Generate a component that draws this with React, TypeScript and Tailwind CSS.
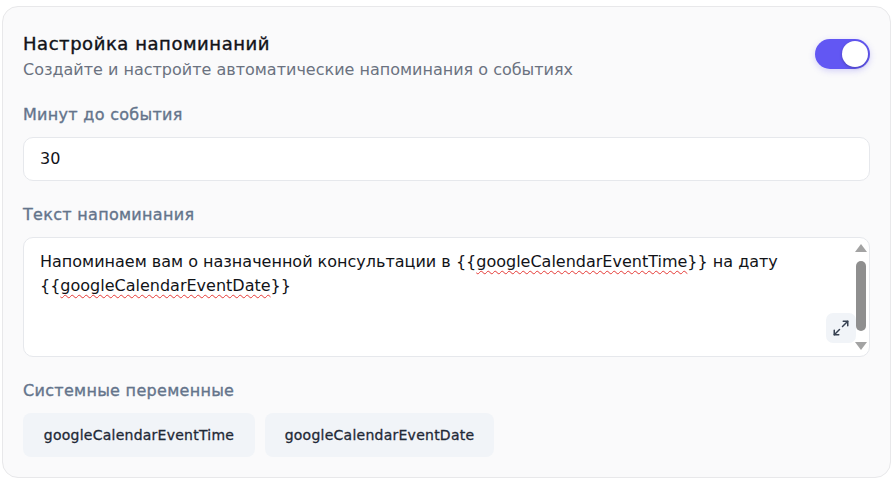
import React from "react";
import { Maximize2 } from "lucide-react";

const font = { fontFamily: "'DejaVu Sans', Inter, sans-serif" };

function Toggle() {
  return (
    <div className="w-[55px] h-[30px] rounded-full bg-[#6257f3] flex items-center justify-end pr-[2px] shadow-[0_2px_6px_rgba(98,87,243,0.25)]">
      <div className="w-[26px] h-[26px] rounded-full bg-white shadow-[0_1px_3px_rgba(0,0,0,0.25)]" />
    </div>
  );
}

function Spell({ children }: { children: React.ReactNode }) {
  return (
    <span className="underline decoration-wavy decoration-[#e53935] decoration-1 underline-offset-[3px]">
      {children}
    </span>
  );
}

function Scrollbar() {
  return (
    <div className="w-[14px] flex flex-col items-center py-[6px] pr-[2px]">
      <div className="w-0 h-0 border-l-[6px] border-r-[6px] border-b-[8px] border-l-transparent border-r-transparent border-b-[#a3a3a3]" />
      <div className="w-[10px] flex-1 rounded-full bg-[#8f8f8f] mt-[9px] mb-[11px]" />
      <div className="w-0 h-0 border-l-[6px] border-r-[6px] border-t-[8px] border-l-transparent border-r-transparent border-t-[#a3a3a3]" />
    </div>
  );
}

function Label({ children }: { children: React.ReactNode }) {
  return (
    <div className="text-[16px] leading-[24px] tracking-[0.3px] text-[#64748b] [-webkit-text-stroke:0.35px_currentColor]">
      {children}
    </div>
  );
}

function Chip({ children, width }: { children: React.ReactNode; width: string }) {
  return (
    <div
      className={`${width} h-[44px] rounded-[8px] bg-[#f1f4f8] flex items-center justify-center text-[14px] tracking-[0.25px] text-[#1f2937] [-webkit-text-stroke:0.3px_currentColor]`}
    >
      {children}
    </div>
  );
}

export default function App() {
  return (
    <div className="w-[896px] h-[483px] bg-white pt-[6px] pl-[2px]" style={font}>
      <div className="w-[889px] h-[472px] rounded-[16px] border border-[#e8e8ea] bg-[#fafafb] px-[20px] pt-[23px] pb-[20px] flex flex-col">
        <div className="flex items-center justify-between">
          <div className="flex flex-col">
            <div className="text-[18px] leading-[28px] tracking-[0.55px] text-[#111318] [-webkit-text-stroke:0.4px_currentColor]">
              Настройка напоминаний
            </div>
            <div className="text-[16px] leading-[24px] text-[#6b7280]">
              Создайте и настройте автоматические напоминания о событиях
            </div>
          </div>
          <div className="-mt-[5px]">
            <Toggle />
          </div>
        </div>

        <div className="mt-[21px]">
          <Label>Минут до события</Label>
        </div>
        <div className="mt-[10px] h-[44px] rounded-[10px] border border-[#e6e8ec] bg-white flex items-center px-[16px] text-[16px] text-[#111318]">
          30
        </div>

        <div className="mt-[22px]">
          <Label>Текст напоминания</Label>
        </div>
        <div className="mt-[10px] h-[120px] rounded-[10px] border border-[#e6e8ec] bg-white flex relative">
          <div className="flex-1 pl-[16px] pt-[12px] pr-[20px] text-[16px] leading-[24px] text-[#111318]">
            Напоминаем вам о назначенной консультации в {"{{"}
            <Spell>googleCalendarEventTime</Spell>
            {"}}"} на дату
            <br />
            {"{{"}
            <Spell>googleCalendarEventDate</Spell>
            {"}}"}
          </div>
          <Scrollbar />
          <div className="absolute right-[13px] bottom-[13px] w-[30px] h-[30px] rounded-[7px] bg-[#f1f4f8] flex items-center justify-center text-[#374151]">
            <Maximize2 size={18} strokeWidth={2} />
          </div>
        </div>

        <div className="mt-[22px]">
          <Label>Системные переменные</Label>
        </div>
        <div className="mt-[10px] flex gap-[10px]">
          <Chip width="w-[232px]">googleCalendarEventTime</Chip>
          <Chip width="w-[229px]">googleCalendarEventDate</Chip>
        </div>
      </div>
    </div>
  );
}
